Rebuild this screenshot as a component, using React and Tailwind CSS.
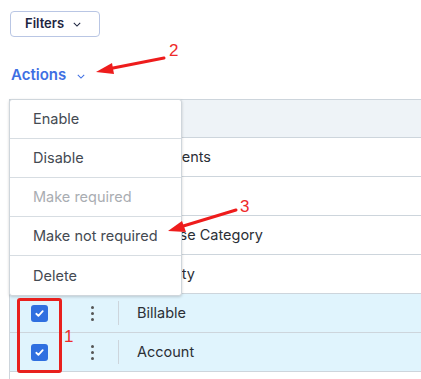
import React from "react";

const font = { fontFamily: "Inter, 'Noto Sans', sans-serif" };

const Chevron = ({ className }) => (
  <svg viewBox="0 0 10 6" className={className} fill="none" stroke="currentColor" strokeWidth="1.3">
    <path d="M1 1l4 4 4-4" />
  </svg>
);

const Check = () => (
  <span className="flex h-[17px] w-[17px] items-center justify-center rounded-[3px] bg-[#2f6fe0]">
    <svg viewBox="0 0 12 12" className="h-[11px] w-[11px]" fill="none" stroke="white" strokeWidth="2" strokeLinecap="round" strokeLinejoin="round">
      <path d="M2.5 6.3l2.3 2.2 4.7-5" />
    </svg>
  </span>
);

const Kebab = () => (
  <span className="flex flex-col items-center gap-[3px]">
    <span className="h-[3px] w-[3px] rounded-full bg-[#555]" />
    <span className="h-[3px] w-[3px] rounded-full bg-[#555]" />
    <span className="h-[3px] w-[3px] rounded-full bg-[#555]" />
  </span>
);

const rows = [
  { label: "Comments" },
  { label: "" },
  { label: "Expense Category" },
  { label: "Quantity" },
  { label: "Billable", selected: true },
  { label: "Account", selected: true },
  { label: "" },
];

const menu = [
  { label: "Enable" },
  { label: "Disable" },
  { label: "Make required", disabled: true },
  { label: "Make not required" },
  { label: "Delete" },
];

export default function App() {
  return (
    <div className="relative h-[379px] w-[421px] overflow-hidden bg-white" style={font}>
      <div className="pl-[10px] pt-[11px]">
        <button className="flex h-[26px] w-[90px] items-center gap-[9px] rounded-[4px] border border-[#b9c6e4] pl-[14px] text-[13px] font-semibold text-[#1d2540]">
          Filters
          <Chevron className="h-[5px] w-[8px]" />
        </button>
      </div>
      <div className="flex h-[50px] items-center gap-[11px] pl-[11px] pt-[26px] text-[15px] font-semibold text-[#3e6fe3]">
        Actions
        <Chevron className="mt-[2px] h-[5px] w-[8px]" />
      </div>

      <div className="ml-[9px] mt-[12px] border-l border-t border-[#cdd5dc]">
        <div className="h-[38px] border-b border-[#cdd5dc] bg-[#eef3f7]" />
        {rows.map((r, i) => (
          <div
            key={i}
            className={`flex h-[39px] items-center border-b border-[#cdd5dc] text-[14.5px] text-[#2b2f36] ${r.selected ? "bg-[#e0f4fd]" : "bg-white"}`}
          >
            <div className="flex w-[56px] justify-center pl-[2px]">{r.selected && <Check />}</div>
            <div className="flex w-[52px] justify-center">{r.selected && <Kebab />}</div>
            <div className="h-[24px] w-px bg-[#cdd5dc]" />
            <div className="pl-[18px]">{r.label}</div>
          </div>
        ))}
      </div>

      <div className="absolute left-[9px] top-[99px] w-[173px] rounded-[3px] border border-[#cfd6dc] bg-white shadow-[0_1px_3px_rgba(0,0,0,0.18)]">
        {menu.map((m, i) => (
          <div
            key={i}
            className={`flex h-[39px] items-center pl-[23px] text-[14.5px] ${i < menu.length - 1 ? "border-b border-[#d7dde2]" : ""} ${m.disabled ? "text-[#a9adb2]" : "text-[#444a52]"}`}
          >
            {m.label}
          </div>
        ))}
      </div>

      <div className="absolute left-[17px] top-[298px] h-[75px] w-[45px] rounded-[3px] border-[3px] border-[#e8201d]" />

      <svg className="absolute left-0 top-0" width="421" height="379" viewBox="0 0 421 379">
        <g stroke="#ee1c1c" strokeWidth="3" strokeLinecap="round" fill="#ee1c1c">
          <line x1="164" y1="58" x2="108" y2="69" />
          <path d="M96 72l16-9 2 11z" stroke="none" />
          <line x1="236" y1="210" x2="180" y2="227" />
          <path d="M168 231l14-10 4 11z" stroke="none" />
        </g>
        <g fill="#ee2a2a" fontFamily="'Liberation Sans', sans-serif" fontSize="17">
          <text x="169" y="56">2</text>
          <text x="240" y="212">3</text>
          <text x="64" y="342">1</text>
        </g>
      </svg>
    </div>
  );
}
